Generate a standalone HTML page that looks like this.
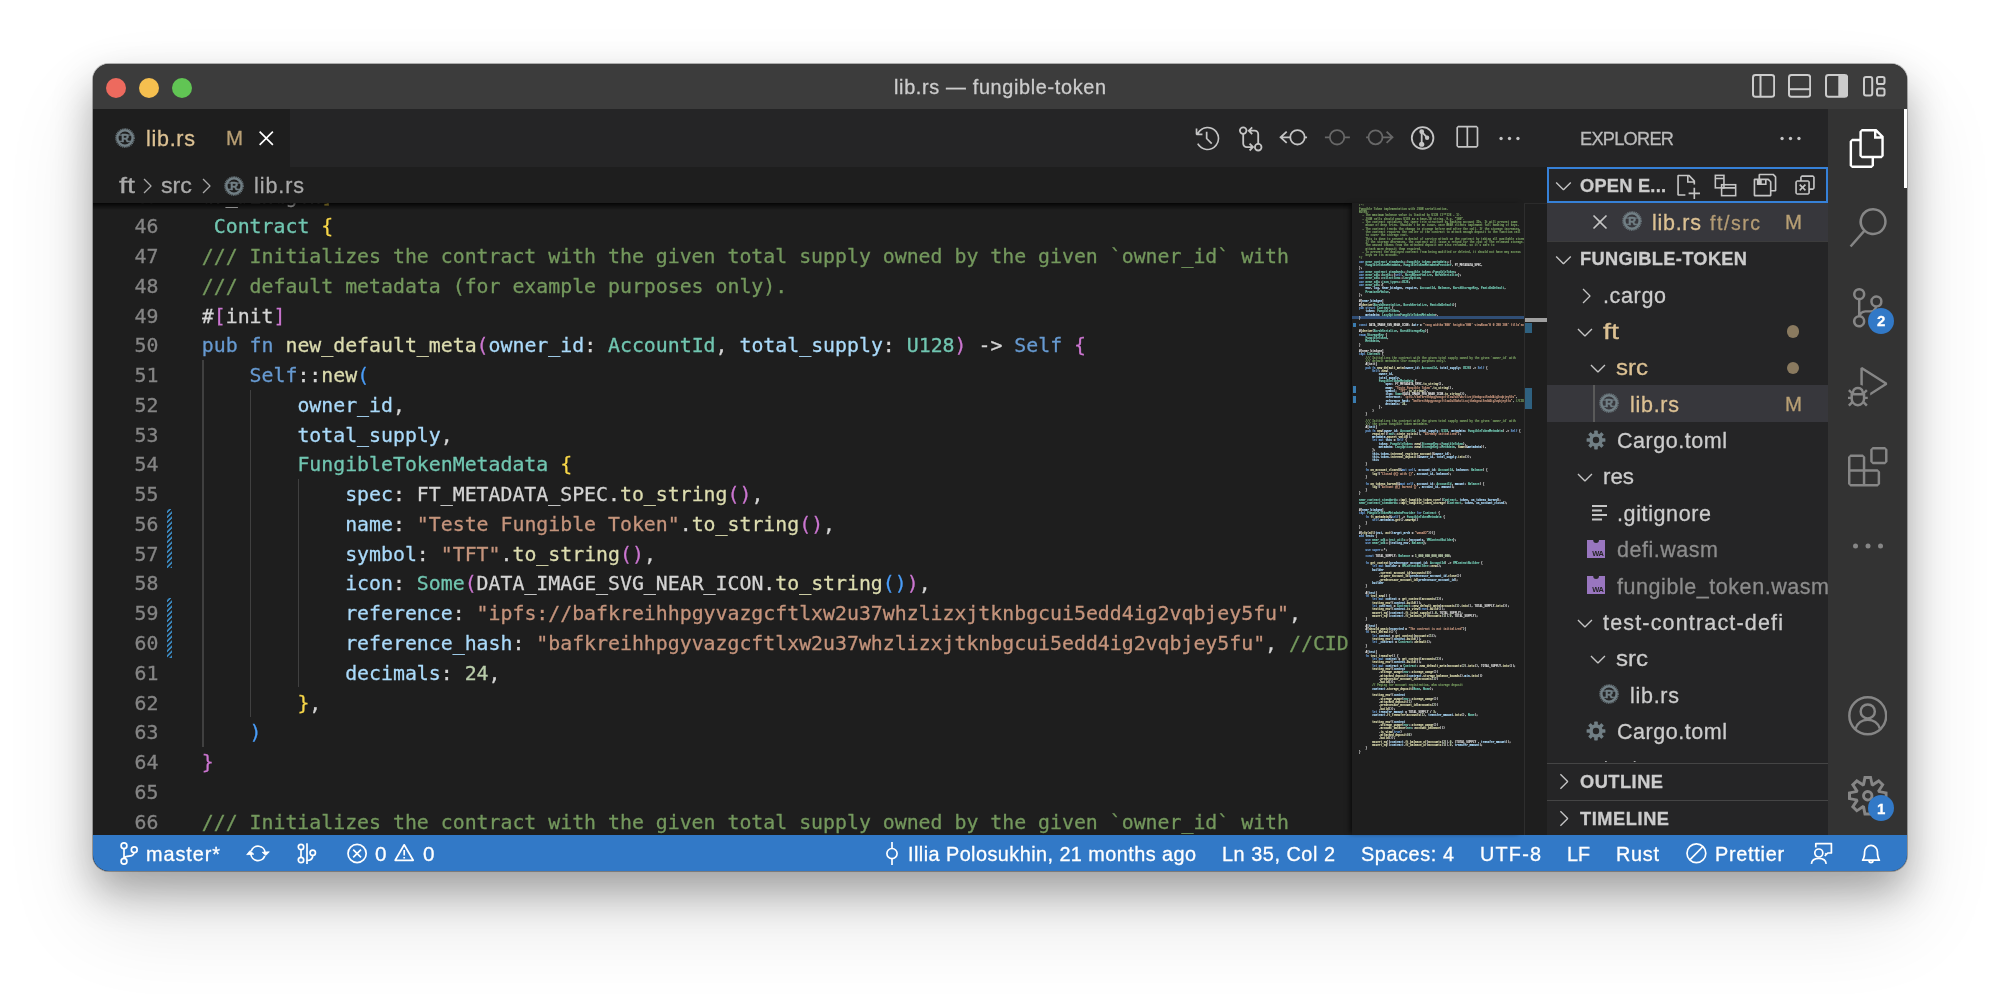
<!DOCTYPE html>
<html lang="en"><head><meta charset="utf-8"><title>lib.rs — fungible-token</title>
<style>
html,body{margin:0;padding:0;background:#FFFFFF;}
body{width:2000px;height:994px;overflow:hidden;position:relative;font-family:"Liberation Sans", "DejaVu Sans", sans-serif;}
#win{position:absolute;left:93px;top:64px;width:1814px;height:807px;border-radius:16px;overflow:hidden;box-shadow:0 0 0 1px rgba(0,0,0,0.28),0 20px 40px rgba(0,0,0,0.30),0 45px 90px rgba(0,0,0,0.12);background:#1E1E1E}
#in{position:absolute;left:-93px;top:-64px;width:2000px;height:994px}
.b{position:absolute;display:block}
.t,.cl,.ln{will-change:transform;-webkit-text-stroke:0.3px}
svg.b{will-change:transform}
.t{position:absolute;white-space:pre;display:block}
.ln{position:absolute;left:0;width:65.5px;height:29.77px;line-height:29.77px;text-align:right;font-family:"DejaVu Sans Mono", "Liberation Mono", monospace;font-size:19.85px;color:#858585}
.cl{position:absolute;white-space:pre;height:29.77px;line-height:29.77px;font-family:"DejaVu Sans Mono", "Liberation Mono", monospace;font-size:19.85px;color:#D4D4D4}
.mm{position:absolute;left:6.500px;top:0.5px;margin:0;font-family:"DejaVu Sans Mono", "Liberation Mono", monospace;font-size:16px;line-height:20px;transform-origin:0 0;transform:scale(0.1713,0.1655);opacity:1;-webkit-text-stroke:1.2px;white-space:pre}
</style></head>
<body>
<div id="win"><div id="in">
<div class="b" style="left:93.0px;top:64.0px;width:1814.0px;height:45.0px;background:#3C3C3C;"></div>
<div class="b" style="left:93.0px;top:109.0px;width:1454.0px;height:58.0px;background:#252526;"></div>
<div class="b" style="left:93.0px;top:109.0px;width:196.5px;height:58.0px;background:#1E1E1E;"></div>
<div class="b" style="left:93.0px;top:167.0px;width:1454.0px;height:704.0px;background:#1E1E1E;"></div>
<div class="b" style="left:1547.0px;top:109.0px;width:281.0px;height:726.0px;background:#252526;"></div>
<div class="b" style="left:1828.0px;top:109.0px;width:79.0px;height:726.0px;background:#333333;"></div>
<div class="b" style="left:93.0px;top:835.0px;width:1814.0px;height:36.0px;background:#3279C7;"></div>
<div class="b" style="left:105.8px;top:77.6px;width:20px;height:20px;border-radius:50%;background:#ED6A5E"></div>
<div class="b" style="left:138.8px;top:77.6px;width:20px;height:20px;border-radius:50%;background:#F5BF4F"></div>
<div class="b" style="left:171.8px;top:77.6px;width:20px;height:20px;border-radius:50%;background:#61C554"></div>
<span id="t1" class="t" style="left:894.0px;top:73.7px;font-size:19.85px;line-height:26px;color:#CCCCCC;letter-spacing:0.662px;">lib.rs — fungible-token</span>
<svg class="b" style="left:1752.0px;top:74.0px;" width="23.2" height="23.8" viewBox="0 0 23.200 23.800" fill="#C5C5C5"><rect x="1" y="1" width="21.200" height="21.800" rx="2.500" fill="none" stroke="#CCCCCC" stroke-width="2"/><rect x="7.500" y="1" width="2" height="21.800" fill="#CCCCCC"/></svg>
<svg class="b" style="left:1788.2px;top:74.0px;" width="23.2" height="23.8" viewBox="0 0 23.200 23.800" fill="#C5C5C5"><rect x="1" y="1" width="21.200" height="21.800" rx="2.500" fill="none" stroke="#CCCCCC" stroke-width="2"/><rect x="1" y="14.200" width="21.200" height="2" fill="#CCCCCC"/></svg>
<svg class="b" style="left:1824.5px;top:74.0px;" width="23.2" height="23.8" viewBox="0 0 23.200 23.800" fill="#C5C5C5"><rect x="1" y="1" width="21.200" height="21.800" rx="2.500" fill="none" stroke="#CCCCCC" stroke-width="2"/><path d="M13.300 1h6.400a2.500 2.500 0 0 1 2.500 2.500v16.800a2.500 2.500 0 0 1-2.500 2.500h-6.400z" fill="#CCCCCC"/></svg>
<svg class="b" style="left:1862.5px;top:76.0px;" width="22.5" height="20.5" viewBox="0 0 22.500 20.500" fill="#C5C5C5"><g fill="none" stroke="#CCCCCC" stroke-width="2"><rect x="1" y="1" width="8.200" height="18.500" rx="2"/><rect x="14" y="1" width="7.500" height="7" rx="1.800"/><rect x="14" y="12.500" width="7.500" height="7" rx="1.800"/></g></svg>
<svg class="b" style="left:114.5px;top:128.0px;" width="20.0" height="20.0" viewBox="0 0 20 20" fill="#C5C5C5"><g><circle cx="10" cy="10" r="9.200" fill="none" stroke="#717F85" stroke-width="1.100" stroke-dasharray="1.100 0.706"/><circle cx="10" cy="10" r="7.650" fill="none" stroke="#717F85" stroke-width="2.500"/><rect x="3.400" y="6.500" width="13.200" height="1.100" fill="#717F85"/><rect x="3.600" y="12.700" width="3.800" height="1.200" fill="#717F85"/><rect x="12.900" y="12.700" width="3.500" height="1.200" fill="#717F85"/><text x="10.100" y="13.900" text-anchor="middle" font-family="Liberation Sans,sans-serif" font-weight="700" font-size="10.800" stroke="#717F85" stroke-width="0.500" fill="#717F85">R</text></g></svg>
<span id="t2" class="t" style="left:146.0px;top:124.5px;font-size:21.50px;line-height:28px;color:#DCC193;letter-spacing:0.719px;">lib.rs</span>
<span id="t3" class="t" style="left:226.0px;top:126.0px;font-size:19.50px;line-height:25px;color:#B89F74;transform-origin:0 50%;transform:scaleX(1.0462);">M</span>
<svg class="b" style="left:253.2px;top:124.8px;" width="26.5" height="26.5" viewBox="0 0 16 16" fill="#FFFFFF"><path d="M8 8.707l3.646 3.647.708-.707L8.707 8l3.647-3.646-.707-.708L8 7.293 4.354 3.646l-.707.708L7.293 8l-3.646 3.646.707.708L8 8.707z"/></svg>
<svg class="b" style="left:1194.0px;top:124.5px;" width="27.0" height="27.0" viewBox="0 0 16 16" fill="#C5C5C5"><path d="M13.507 12.324a7 7 0 0 0 .065-8.56A7 7 0 0 0 2 4.393V2H1v3.5l.5.5H5V5H2.811a6.008 6.008 0 1 1-.135 5.77l-.887.462a7 7 0 0 0 11.718 1.092zm-3.361-.97l.708-.707L8 7.792V4H7v4l.146.354 3 3z"/></svg>
<svg class="b" style="left:1237.0px;top:124.0px" width="28.0" height="28.0" viewBox="0 0 28.0 28.0"><g fill="none" stroke="#C5C5C5" stroke-width="1.8"><circle cx="6.200" cy="6.600" r="3.300"/><circle cx="21.200" cy="23.200" r="3.300"/><path d="M6.200 9.900v9.600a3.600 3.600 0 0 0 3.600 3.600h6M12.600 19.700l3.400 3.400-3.400 3.400M21.200 19.900v-9.600a3.600 3.600 0 0 0-3.600-3.600h-5.800M15.200 3.300l-3.400 3.400 3.400 3.400"/></g></svg>
<svg class="b" style="left:1278.0px;top:125.0px" width="32.0" height="25.0" viewBox="0 0 32.0 25.0"><g fill="none" stroke="#C5C5C5" stroke-width="1.8"><circle cx="19.450" cy="12.300" r="7.200"/><path d="M26.650 12.300h2.400M12.250 12.300H2.600M8.700 6.700L2.600 12.300l6.100 5.600"/></g></svg>
<svg class="b" style="left:1323.0px;top:125.0px" width="29.0" height="25.0" viewBox="0 0 29.0 25.0"><g fill="none" stroke="#686868" stroke-width="1.8"><circle cx="14.060" cy="12.300" r="7.200"/><path d="M1.900 12.300h4.900M21.300 12.300h5.600"/></g></svg>
<svg class="b" style="left:1364.0px;top:125.0px" width="32.0" height="25.0" viewBox="0 0 32.0 25.0"><g fill="none" stroke="#686868" stroke-width="1.8"><circle cx="11.500" cy="12.300" r="7.000"/><path d="M2.100 12.300h2.400M18.500 12.300h9.900M22.600 6.700l5.900 5.600-5.900 5.600"/></g></svg>
<svg class="b" style="left:1409.0px;top:124.0px" width="28.0" height="28.0" viewBox="0 0 28.0 28.0"><g fill="none" stroke="#C5C5C5" stroke-width="1.8"><circle cx="13.600" cy="13.950" r="10.800"/><path d="M12.700 7.650v12.600M12.700 7.650l5.400 6.050"/></g><g fill="#C5C5C5"><circle cx="12.700" cy="7.650" r="2.400"/><circle cx="12.700" cy="20.250" r="2.600"/><circle cx="18.100" cy="13.700" r="2.200"/></g></svg>
<svg class="b" style="left:1452.5px;top:124.0px;" width="27.0" height="27.0" viewBox="0 0 16 16" fill="#C5C5C5"><path d="M14 1H3L2 2v11l1 1h11l1-1V2l-1-1zM8 13H3V2h5v11zm6 0H9V2h5v11z"/></svg>
<svg class="b" style="left:1495.5px;top:124.5px;" width="27.0" height="27.0" viewBox="0 0 16 16" fill="#C5C5C5"><circle cx="3" cy="8" r="1"/><circle cx="8" cy="8" r="1"/><circle cx="13" cy="8" r="1"/></svg>
<span id="t4" class="t" style="left:119.0px;top:172.0px;font-size:21.50px;line-height:28px;color:#A9A9A9;transform-origin:0 50%;transform:scaleX(1.3386);">ft</span>
<svg class="b" style="left:135.0px;top:174.0px;" width="24.0" height="24.0" viewBox="0 0 16 16" fill="#A9A9A9"><path d="M10.072 8.024L5.715 3.667l.618-.62L11 7.716v.618L6.333 13l-.618-.619 4.357-4.357z"/></svg>
<span id="t5" class="t" style="left:161.0px;top:172.0px;font-size:21.50px;line-height:28px;color:#A9A9A9;transform-origin:0 50%;transform:scaleX(1.0812);">src</span>
<svg class="b" style="left:194.0px;top:174.0px;" width="24.0" height="24.0" viewBox="0 0 16 16" fill="#A9A9A9"><path d="M10.072 8.024L5.715 3.667l.618-.62L11 7.716v.618L6.333 13l-.618-.619 4.357-4.357z"/></svg>
<svg class="b" style="left:224.0px;top:175.5px;" width="20.0" height="20.0" viewBox="0 0 20 20" fill="#C5C5C5"><g><circle cx="10" cy="10" r="9.200" fill="none" stroke="#717F85" stroke-width="1.100" stroke-dasharray="1.100 0.706"/><circle cx="10" cy="10" r="7.650" fill="none" stroke="#717F85" stroke-width="2.500"/><rect x="3.400" y="6.500" width="13.200" height="1.100" fill="#717F85"/><rect x="3.600" y="12.700" width="3.800" height="1.200" fill="#717F85"/><rect x="12.900" y="12.700" width="3.500" height="1.200" fill="#717F85"/><text x="10.100" y="13.900" text-anchor="middle" font-family="Liberation Sans,sans-serif" font-weight="700" font-size="10.800" stroke="#717F85" stroke-width="0.500" fill="#717F85">R</text></g></svg>
<span id="t6" class="t" style="left:254.0px;top:172.0px;font-size:21.50px;line-height:28px;color:#A9A9A9;letter-spacing:0.919px;">lib.rs</span>
<div class="b" id="code" style="left:93px;top:203.4px;width:1259px;height:631.6px;overflow:hidden">
<div class="b" style="left:109.0px;top:156.6px;width:1.5px;height:387.0px;background:#404040"></div>
<div class="b" style="left:156.8px;top:186.4px;width:1.5px;height:327.5px;background:#404040"></div>
<div class="b" style="left:204.6px;top:275.7px;width:1.5px;height:208.4px;background:#404040"></div>
<div class="cl" style="top:-20.97px;left:61.20px"><span style="color:#D4D4D4">#</span><span style="color:#F9D849">[</span><span style="color:#D4D4D4">near_bindgen</span><span style="color:#F9D849">]</span></div>
<div class="cl" style="top:8.80px;left:61.20px"><span style="color:#679AD1">impl </span><span style="color:#71C6B1">Contract </span><span style="color:#F9D849">{</span></div>
<div class="cl" style="top:38.57px;left:61.20px"><span style="color:#D4D4D4">    </span><span style="color:#74985D">/// Initializes the contract with the given total supply owned by the given `owner_id` with</span></div>
<div class="cl" style="top:68.34px;left:61.20px"><span style="color:#D4D4D4">    </span><span style="color:#74985D">/// default metadata (for example purposes only).</span></div>
<div class="cl" style="top:98.11px;left:61.20px"><span style="color:#D4D4D4">    #</span><span style="color:#CC76D1">[</span><span style="color:#D4D4D4">init</span><span style="color:#CC76D1">]</span></div>
<div class="cl" style="top:127.88px;left:61.20px"><span style="color:#D4D4D4">    </span><span style="color:#679AD1">pub fn </span><span style="color:#DCDCAF">new_default_meta</span><span style="color:#CC76D1">(</span><span style="color:#AADAFA">owner_id</span><span style="color:#D4D4D4">: </span><span style="color:#71C6B1">AccountId</span><span style="color:#D4D4D4">, </span><span style="color:#AADAFA">total_supply</span><span style="color:#D4D4D4">: </span><span style="color:#71C6B1">U128</span><span style="color:#CC76D1">) </span><span style="color:#D4D4D4">-&gt; </span><span style="color:#679AD1">Self </span><span style="color:#CC76D1">{</span></div>
<div class="cl" style="top:157.65px;left:61.20px"><span style="color:#D4D4D4">        </span><span style="color:#679AD1">Self</span><span style="color:#D4D4D4">::</span><span style="color:#DCDCAF">new</span><span style="color:#4A9DF8">(</span></div>
<div class="cl" style="top:187.42px;left:61.20px"><span style="color:#D4D4D4">            </span><span style="color:#AADAFA">owner_id</span><span style="color:#D4D4D4">,</span></div>
<div class="cl" style="top:217.19px;left:61.20px"><span style="color:#D4D4D4">            </span><span style="color:#AADAFA">total_supply</span><span style="color:#D4D4D4">,</span></div>
<div class="cl" style="top:246.96px;left:61.20px"><span style="color:#D4D4D4">            </span><span style="color:#71C6B1">FungibleTokenMetadata </span><span style="color:#F9D849">{</span></div>
<div class="cl" style="top:276.73px;left:61.20px"><span style="color:#D4D4D4">                </span><span style="color:#AADAFA">spec</span><span style="color:#D4D4D4">: FT_METADATA_SPEC.</span><span style="color:#DCDCAF">to_string</span><span style="color:#CC76D1">()</span><span style="color:#D4D4D4">,</span></div>
<div class="cl" style="top:306.50px;left:61.20px"><span style="color:#D4D4D4">                </span><span style="color:#AADAFA">name</span><span style="color:#D4D4D4">: </span><span style="color:#C5947C">"Teste Fungible Token"</span><span style="color:#D4D4D4">.</span><span style="color:#DCDCAF">to_string</span><span style="color:#CC76D1">()</span><span style="color:#D4D4D4">,</span></div>
<div class="cl" style="top:336.27px;left:61.20px"><span style="color:#D4D4D4">                </span><span style="color:#AADAFA">symbol</span><span style="color:#D4D4D4">: </span><span style="color:#C5947C">"TFT"</span><span style="color:#D4D4D4">.</span><span style="color:#DCDCAF">to_string</span><span style="color:#CC76D1">()</span><span style="color:#D4D4D4">,</span></div>
<div class="cl" style="top:366.04px;left:61.20px"><span style="color:#D4D4D4">                </span><span style="color:#AADAFA">icon</span><span style="color:#D4D4D4">: </span><span style="color:#71C6B1">Some</span><span style="color:#CC76D1">(</span><span style="color:#D4D4D4">DATA_IMAGE_SVG_NEAR_ICON.</span><span style="color:#DCDCAF">to_string</span><span style="color:#4A9DF8">()</span><span style="color:#CC76D1">)</span><span style="color:#D4D4D4">,</span></div>
<div class="cl" style="top:395.81px;left:61.20px"><span style="color:#D4D4D4">                </span><span style="color:#AADAFA">reference</span><span style="color:#D4D4D4">: </span><span style="color:#C5947C">"ipfs://bafkreihhpgyvazgcftlxw2u37whzlizxjtknbgcui5edd4ig2vqbjey5fu"</span><span style="color:#D4D4D4">,</span></div>
<div class="cl" style="top:425.58px;left:61.20px"><span style="color:#D4D4D4">                </span><span style="color:#AADAFA">reference_hash</span><span style="color:#D4D4D4">: </span><span style="color:#C5947C">"bafkreihhpgyvazgcftlxw2u37whzlizxjtknbgcui5edd4ig2vqbjey5fu"</span><span style="color:#D4D4D4">, </span><span style="color:#74985D">//CID</span></div>
<div class="cl" style="top:455.35px;left:61.20px"><span style="color:#D4D4D4">                </span><span style="color:#AADAFA">decimals</span><span style="color:#D4D4D4">: </span><span style="color:#BACDAB">24</span><span style="color:#D4D4D4">,</span></div>
<div class="cl" style="top:485.12px;left:61.20px"><span style="color:#D4D4D4">            </span><span style="color:#F9D849">}</span><span style="color:#D4D4D4">,</span></div>
<div class="cl" style="top:514.89px;left:61.20px"><span style="color:#D4D4D4">        </span><span style="color:#4A9DF8">)</span></div>
<div class="cl" style="top:544.66px;left:61.20px"><span style="color:#D4D4D4">    </span><span style="color:#CC76D1">}</span></div>
<div class="cl" style="top:574.43px;left:61.20px"></div>
<div class="cl" style="top:604.20px;left:61.20px"><span style="color:#D4D4D4">    </span><span style="color:#74985D">/// Initializes the contract with the given total supply owned by the given `owner_id` with</span></div>
<div class="b" style="left:0;top:0;width:108.5px;height:100%;background:#1E1E1E"></div>
<div class="ln" style="top:-20.97px"><span class="num">45</span></div>
<div class="ln" style="top:8.80px"><span class="num">46</span></div>
<div class="ln" style="top:38.57px"><span class="num">47</span></div>
<div class="ln" style="top:68.34px"><span class="num">48</span></div>
<div class="ln" style="top:98.11px"><span class="num">49</span></div>
<div class="ln" style="top:127.88px"><span class="num">50</span></div>
<div class="ln" style="top:157.65px"><span class="num">51</span></div>
<div class="ln" style="top:187.42px"><span class="num">52</span></div>
<div class="ln" style="top:217.19px"><span class="num">53</span></div>
<div class="ln" style="top:246.96px"><span class="num">54</span></div>
<div class="ln" style="top:276.73px"><span class="num">55</span></div>
<div class="ln" style="top:306.50px"><span class="num">56</span></div>
<div class="ln" style="top:336.27px"><span class="num">57</span></div>
<div class="ln" style="top:366.04px"><span class="num">58</span></div>
<div class="ln" style="top:395.81px"><span class="num">59</span></div>
<div class="ln" style="top:425.58px"><span class="num">60</span></div>
<div class="ln" style="top:455.35px"><span class="num">61</span></div>
<div class="ln" style="top:485.12px"><span class="num">62</span></div>
<div class="ln" style="top:514.89px"><span class="num">63</span></div>
<div class="ln" style="top:544.66px"><span class="num">64</span></div>
<div class="ln" style="top:574.43px"><span class="num">65</span></div>
<div class="ln" style="top:604.20px"><span class="num">66</span></div>
<div class="b" style="left:73.9px;top:305.5px;width:5.400px;height:59.5px;background:repeating-linear-gradient(135deg,#1E1E1E 0,#1E1E1E 1.000px,#3A86BC 1.900px,#3A86BC 3.000px,#1E1E1E 3.540px)"></div>
<div class="b" style="left:73.9px;top:394.8px;width:5.400px;height:59.5px;background:repeating-linear-gradient(135deg,#1E1E1E 0,#1E1E1E 1.000px,#3A86BC 1.900px,#3A86BC 3.000px,#1E1E1E 3.540px)"></div>
<div class="b" style="left:0;top:0;width:100%;height:7px;background:linear-gradient(#000000cc,#00000000)"></div>
</div>
<div class="b" style="left:1352px;top:203.4px;width:172px;height:631.6px;overflow:hidden;box-shadow:-4px 0 5px -2px #000000aa">
<div class="b" style="left:0;top:112.4px;width:100%;height:3.400px;background:#304E75"></div>
<pre class="mm"><span style="color:#74985D">/*!</span>
<span style="color:#74985D">Fungible Token implementation with JSON serialization.</span>
<span style="color:#74985D">NOTES:</span>
<span style="color:#74985D">  - The maximum balance value is limited by U128 (2**128 - 1).</span>
<span style="color:#74985D">  - JSON calls should pass U128 as a base-10 string. E.g. "100".</span>
<span style="color:#74985D">  - The contract optimizes the inner trie structure by hashing account IDs. It will prevent some</span>
<span style="color:#74985D">    abuse of deep tries. Shouldn't be an issue, once NEAR clients implement full hashing of keys.</span>
<span style="color:#74985D">  - The contract tracks the change in storage before and after the call. If the storage increases,</span>
<span style="color:#74985D">    the contract requires the caller of the contract to attach enough deposit to the function call</span>
<span style="color:#74985D">    to cover the storage cost.</span>
<span style="color:#74985D">    This is done to prevent a denial of service attack on the contract by taking all available storage.</span>
<span style="color:#74985D">    If the storage decreases, the contract will issue a refund for the cost of the released storage.</span>
<span style="color:#74985D">    The unused tokens from the attached deposit are also refunded, so it's safe to</span>
<span style="color:#74985D">    attach more deposit than required.</span>
<span style="color:#74985D">  - To prevent the deployed contract from being modified or deleted, it should not have any access</span>
<span style="color:#74985D">    keys on its account.</span>
<span style="color:#74985D">*/</span>
<span style="color:#679AD1">use </span><span style="color:#71C6B1">near_contract_standards</span><span style="color:#D4D4D4">::</span><span style="color:#71C6B1">fungible_token</span><span style="color:#D4D4D4">::</span><span style="color:#71C6B1">metadata</span><span style="color:#D4D4D4">::{</span>
<span style="color:#D4D4D4">    </span><span style="color:#71C6B1">FungibleTokenMetadata</span><span style="color:#D4D4D4">, </span><span style="color:#71C6B1">FungibleTokenMetadataProvider</span><span style="color:#D4D4D4">, FT_METADATA_SPEC,</span>
<span style="color:#D4D4D4">};</span>
<span style="color:#679AD1">use </span><span style="color:#71C6B1">near_contract_standards</span><span style="color:#D4D4D4">::</span><span style="color:#71C6B1">fungible_token</span><span style="color:#D4D4D4">::</span><span style="color:#71C6B1">FungibleToken</span><span style="color:#D4D4D4">;</span>
<span style="color:#679AD1">use </span><span style="color:#71C6B1">near_sdk</span><span style="color:#D4D4D4">::</span><span style="color:#71C6B1">borsh</span><span style="color:#D4D4D4">::{</span><span style="color:#679AD1">self</span><span style="color:#D4D4D4">, </span><span style="color:#71C6B1">BorshDeserialize</span><span style="color:#D4D4D4">, </span><span style="color:#71C6B1">BorshSerialize</span><span style="color:#D4D4D4">};</span>
<span style="color:#679AD1">use </span><span style="color:#71C6B1">near_sdk</span><span style="color:#D4D4D4">::</span><span style="color:#71C6B1">collections</span><span style="color:#D4D4D4">::</span><span style="color:#71C6B1">LazyOption</span><span style="color:#D4D4D4">;</span>
<span style="color:#679AD1">use </span><span style="color:#71C6B1">near_sdk</span><span style="color:#D4D4D4">::</span><span style="color:#71C6B1">json_types</span><span style="color:#D4D4D4">::</span><span style="color:#71C6B1">U128</span><span style="color:#D4D4D4">;</span>
<span style="color:#679AD1">use </span><span style="color:#71C6B1">near_sdk</span><span style="color:#D4D4D4">::{</span>
<span style="color:#D4D4D4">    </span><span style="color:#AADAFA">env</span><span style="color:#D4D4D4">, </span><span style="color:#AADAFA">log</span><span style="color:#D4D4D4">, </span><span style="color:#AADAFA">near_bindgen</span><span style="color:#D4D4D4">, </span><span style="color:#AADAFA">require</span><span style="color:#D4D4D4">, </span><span style="color:#71C6B1">AccountId</span><span style="color:#D4D4D4">, </span><span style="color:#71C6B1">Balance</span><span style="color:#D4D4D4">, </span><span style="color:#71C6B1">BorshStorageKey</span><span style="color:#D4D4D4">, </span><span style="color:#71C6B1">PanicOnDefault</span><span style="color:#D4D4D4">,</span>
<span style="color:#D4D4D4">    </span><span style="color:#71C6B1">PromiseOrValue</span><span style="color:#D4D4D4">,</span>
<span style="color:#D4D4D4">};</span>

<span style="color:#D4D4D4">#[</span><span style="color:#AADAFA">near_bindgen</span><span style="color:#D4D4D4">]</span>
<span style="color:#D4D4D4">#[</span><span style="color:#DCDCAF">derive</span><span style="color:#D4D4D4">(</span><span style="color:#71C6B1">BorshDeserialize</span><span style="color:#D4D4D4">, </span><span style="color:#71C6B1">BorshSerialize</span><span style="color:#D4D4D4">, </span><span style="color:#71C6B1">PanicOnDefault</span><span style="color:#D4D4D4">)]</span>
<span style="color:#679AD1">pub struct </span><span style="color:#71C6B1">Contract </span><span style="color:#D4D4D4">{</span>
<span style="color:#D4D4D4">    </span><span style="color:#AADAFA">token</span><span style="color:#D4D4D4">: </span><span style="color:#71C6B1">FungibleToken</span><span style="color:#D4D4D4">,</span>
<span style="color:#D4D4D4">    </span><span style="color:#AADAFA">metadata</span><span style="color:#D4D4D4">: </span><span style="color:#71C6B1">LazyOption</span><span style="color:#D4D4D4">&lt;</span><span style="color:#71C6B1">FungibleTokenMetadata</span><span style="color:#D4D4D4">&gt;,</span>
<span style="color:#D4D4D4">}</span>

<span style="color:#679AD1">const </span><span style="color:#D4D4D4">DATA_IMAGE_SVG_NEAR_ICON: &amp;</span><span style="color:#AADAFA">str </span><span style="color:#D4D4D4">= </span><span style="color:#C5947C">"&lt;svg width='800' height='800' viewBox='0 0 288 288' fill='none' stroke='currentColor'&gt;"</span><span style="color:#D4D4D4">;</span>

<span style="color:#D4D4D4">#[</span><span style="color:#DCDCAF">derive</span><span style="color:#D4D4D4">(</span><span style="color:#71C6B1">BorshSerialize</span><span style="color:#D4D4D4">, </span><span style="color:#71C6B1">BorshStorageKey</span><span style="color:#D4D4D4">)]</span>
<span style="color:#679AD1">enum </span><span style="color:#71C6B1">StorageKey </span><span style="color:#D4D4D4">{</span>
<span style="color:#D4D4D4">    </span><span style="color:#71C6B1">FungibleToken</span><span style="color:#D4D4D4">,</span>
<span style="color:#D4D4D4">    </span><span style="color:#71C6B1">Metadata</span><span style="color:#D4D4D4">,</span>
<span style="color:#D4D4D4">}</span>

<span style="color:#D4D4D4">#[near_bindgen]</span>
<span style="color:#679AD1">impl </span><span style="color:#71C6B1">Contract </span><span style="color:#D4D4D4">{</span>
<span style="color:#D4D4D4">    </span><span style="color:#74985D">/// Initializes the contract with the given total supply owned by the given `owner_id` with</span>
<span style="color:#D4D4D4">    </span><span style="color:#74985D">/// default metadata (for example purposes only).</span>
<span style="color:#D4D4D4">    #[init]</span>
<span style="color:#D4D4D4">    </span><span style="color:#679AD1">pub fn </span><span style="color:#DCDCAF">new_default_meta</span><span style="color:#D4D4D4">(</span><span style="color:#AADAFA">owner_id</span><span style="color:#D4D4D4">: </span><span style="color:#71C6B1">AccountId</span><span style="color:#D4D4D4">, </span><span style="color:#AADAFA">total_supply</span><span style="color:#D4D4D4">: </span><span style="color:#71C6B1">U128</span><span style="color:#D4D4D4">) -&gt; </span><span style="color:#679AD1">Self </span><span style="color:#D4D4D4">{</span>
<span style="color:#D4D4D4">        </span><span style="color:#679AD1">Self</span><span style="color:#D4D4D4">::</span><span style="color:#DCDCAF">new</span><span style="color:#D4D4D4">(</span>
<span style="color:#D4D4D4">            </span><span style="color:#AADAFA">owner_id</span><span style="color:#D4D4D4">,</span>
<span style="color:#D4D4D4">            </span><span style="color:#AADAFA">total_supply</span><span style="color:#D4D4D4">,</span>
<span style="color:#D4D4D4">            </span><span style="color:#71C6B1">FungibleTokenMetadata </span><span style="color:#D4D4D4">{</span>
<span style="color:#D4D4D4">                </span><span style="color:#AADAFA">spec</span><span style="color:#D4D4D4">: FT_METADATA_SPEC.</span><span style="color:#DCDCAF">to_string</span><span style="color:#D4D4D4">(),</span>
<span style="color:#D4D4D4">                </span><span style="color:#AADAFA">name</span><span style="color:#D4D4D4">: </span><span style="color:#C5947C">"Teste Fungible Token"</span><span style="color:#D4D4D4">.</span><span style="color:#DCDCAF">to_string</span><span style="color:#D4D4D4">(),</span>
<span style="color:#D4D4D4">                </span><span style="color:#AADAFA">symbol</span><span style="color:#D4D4D4">: </span><span style="color:#C5947C">"TFT"</span><span style="color:#D4D4D4">.</span><span style="color:#DCDCAF">to_string</span><span style="color:#D4D4D4">(),</span>
<span style="color:#D4D4D4">                </span><span style="color:#AADAFA">icon</span><span style="color:#D4D4D4">: </span><span style="color:#71C6B1">Some</span><span style="color:#D4D4D4">(DATA_IMAGE_SVG_NEAR_ICON.</span><span style="color:#DCDCAF">to_string</span><span style="color:#D4D4D4">()),</span>
<span style="color:#D4D4D4">                </span><span style="color:#AADAFA">reference</span><span style="color:#D4D4D4">: </span><span style="color:#C5947C">"ipfs://bafkreihhpgyvazgcftlxw2u37whzlizxjtknbgcui5edd4ig2vqbjey5fu"</span><span style="color:#D4D4D4">,</span>
<span style="color:#D4D4D4">                </span><span style="color:#AADAFA">reference_hash</span><span style="color:#D4D4D4">: </span><span style="color:#C5947C">"bafkreihhpgyvazgcftlxw2u37whzlizxjtknbgcui5edd4ig2vqbjey5fu"</span><span style="color:#D4D4D4">, </span><span style="color:#74985D">//CID</span>
<span style="color:#D4D4D4">                </span><span style="color:#AADAFA">decimals</span><span style="color:#D4D4D4">: </span><span style="color:#BACDAB">24</span><span style="color:#D4D4D4">,</span>
<span style="color:#D4D4D4">            },</span>
<span style="color:#D4D4D4">        )</span>
<span style="color:#D4D4D4">    }</span>

<span style="color:#D4D4D4">    </span><span style="color:#74985D">/// Initializes the contract with the given total supply owned by the given `owner_id` with</span>
<span style="color:#D4D4D4">    </span><span style="color:#74985D">/// the given fungible token metadata.</span>
<span style="color:#D4D4D4">    #[</span><span style="color:#AADAFA">init</span><span style="color:#D4D4D4">]</span>
<span style="color:#D4D4D4">    </span><span style="color:#679AD1">pub fn </span><span style="color:#DCDCAF">new</span><span style="color:#D4D4D4">(</span><span style="color:#AADAFA">owner_id</span><span style="color:#D4D4D4">: </span><span style="color:#71C6B1">AccountId</span><span style="color:#D4D4D4">, </span><span style="color:#AADAFA">total_supply</span><span style="color:#D4D4D4">: </span><span style="color:#71C6B1">U128</span><span style="color:#D4D4D4">, </span><span style="color:#AADAFA">metadata</span><span style="color:#D4D4D4">: </span><span style="color:#71C6B1">FungibleTokenMetadata</span><span style="color:#D4D4D4">) -&gt; </span><span style="color:#679AD1">Self </span><span style="color:#D4D4D4">{</span>
<span style="color:#D4D4D4">        </span><span style="color:#DCDCAF">require</span><span style="color:#D4D4D4">!(!</span><span style="color:#71C6B1">env</span><span style="color:#D4D4D4">::</span><span style="color:#DCDCAF">state_exists</span><span style="color:#D4D4D4">(), </span><span style="color:#C5947C">"Already initialized"</span><span style="color:#D4D4D4">);</span>
<span style="color:#D4D4D4">        </span><span style="color:#AADAFA">metadata</span><span style="color:#D4D4D4">.</span><span style="color:#DCDCAF">assert_valid</span><span style="color:#D4D4D4">();</span>
<span style="color:#D4D4D4">        </span><span style="color:#679AD1">let mut </span><span style="color:#AADAFA">this </span><span style="color:#D4D4D4">= </span><span style="color:#679AD1">Self </span><span style="color:#D4D4D4">{</span>
<span style="color:#D4D4D4">            </span><span style="color:#AADAFA">token</span><span style="color:#D4D4D4">: </span><span style="color:#71C6B1">FungibleToken</span><span style="color:#D4D4D4">::</span><span style="color:#DCDCAF">new</span><span style="color:#D4D4D4">(</span><span style="color:#71C6B1">StorageKey</span><span style="color:#D4D4D4">::</span><span style="color:#71C6B1">FungibleToken</span><span style="color:#D4D4D4">),</span>
<span style="color:#D4D4D4">            </span><span style="color:#AADAFA">metadata</span><span style="color:#D4D4D4">: </span><span style="color:#71C6B1">LazyOption</span><span style="color:#D4D4D4">::</span><span style="color:#DCDCAF">new</span><span style="color:#D4D4D4">(</span><span style="color:#71C6B1">StorageKey</span><span style="color:#D4D4D4">::</span><span style="color:#71C6B1">Metadata</span><span style="color:#D4D4D4">, </span><span style="color:#DCDCAF">Some</span><span style="color:#D4D4D4">(&amp;</span><span style="color:#AADAFA">metadata</span><span style="color:#D4D4D4">)),</span>
<span style="color:#D4D4D4">        };</span>
<span style="color:#D4D4D4">        </span><span style="color:#AADAFA">this</span><span style="color:#D4D4D4">.</span><span style="color:#AADAFA">token</span><span style="color:#D4D4D4">.</span><span style="color:#DCDCAF">internal_register_account</span><span style="color:#D4D4D4">(&amp;</span><span style="color:#AADAFA">owner_id</span><span style="color:#D4D4D4">);</span>
<span style="color:#D4D4D4">        </span><span style="color:#AADAFA">this</span><span style="color:#D4D4D4">.</span><span style="color:#AADAFA">token</span><span style="color:#D4D4D4">.</span><span style="color:#DCDCAF">internal_deposit</span><span style="color:#D4D4D4">(&amp;</span><span style="color:#AADAFA">owner_id</span><span style="color:#D4D4D4">, </span><span style="color:#AADAFA">total_supply</span><span style="color:#D4D4D4">.</span><span style="color:#DCDCAF">into</span><span style="color:#D4D4D4">());</span>
<span style="color:#D4D4D4">        </span><span style="color:#AADAFA">this</span>
<span style="color:#D4D4D4">    }</span>

<span style="color:#D4D4D4">    </span><span style="color:#679AD1">fn </span><span style="color:#DCDCAF">on_account_closed</span><span style="color:#D4D4D4">(&amp;</span><span style="color:#679AD1">mut self</span><span style="color:#D4D4D4">, </span><span style="color:#AADAFA">account_id</span><span style="color:#D4D4D4">: </span><span style="color:#71C6B1">AccountId</span><span style="color:#D4D4D4">, </span><span style="color:#AADAFA">balance</span><span style="color:#D4D4D4">: </span><span style="color:#71C6B1">Balance</span><span style="color:#D4D4D4">) {</span>
<span style="color:#D4D4D4">        </span><span style="color:#DCDCAF">log</span><span style="color:#D4D4D4">!(</span><span style="color:#C5947C">"Closed @{} with {}"</span><span style="color:#D4D4D4">, </span><span style="color:#AADAFA">account_id</span><span style="color:#D4D4D4">, </span><span style="color:#AADAFA">balance</span><span style="color:#D4D4D4">);</span>
<span style="color:#D4D4D4">    }</span>

<span style="color:#D4D4D4">    </span><span style="color:#679AD1">fn </span><span style="color:#DCDCAF">on_tokens_burned</span><span style="color:#D4D4D4">(&amp;</span><span style="color:#679AD1">mut self</span><span style="color:#D4D4D4">, </span><span style="color:#AADAFA">account_id</span><span style="color:#D4D4D4">: </span><span style="color:#71C6B1">AccountId</span><span style="color:#D4D4D4">, </span><span style="color:#AADAFA">amount</span><span style="color:#D4D4D4">: </span><span style="color:#71C6B1">Balance</span><span style="color:#D4D4D4">) {</span>
<span style="color:#D4D4D4">        </span><span style="color:#DCDCAF">log</span><span style="color:#D4D4D4">!(</span><span style="color:#C5947C">"Account @{} burned {}"</span><span style="color:#D4D4D4">, </span><span style="color:#AADAFA">account_id</span><span style="color:#D4D4D4">, </span><span style="color:#AADAFA">amount</span><span style="color:#D4D4D4">);</span>
<span style="color:#D4D4D4">    }</span>
<span style="color:#D4D4D4">}</span>

<span style="color:#71C6B1">near_contract_standards</span><span style="color:#D4D4D4">::</span><span style="color:#DCDCAF">impl_fungible_token_core</span><span style="color:#D4D4D4">!(</span><span style="color:#71C6B1">Contract</span><span style="color:#D4D4D4">, </span><span style="color:#AADAFA">token</span><span style="color:#D4D4D4">, </span><span style="color:#AADAFA">on_tokens_burned</span><span style="color:#D4D4D4">);</span>
<span style="color:#71C6B1">near_contract_standards</span><span style="color:#D4D4D4">::</span><span style="color:#DCDCAF">impl_fungible_token_storage</span><span style="color:#D4D4D4">!(</span><span style="color:#71C6B1">Contract</span><span style="color:#D4D4D4">, </span><span style="color:#AADAFA">token</span><span style="color:#D4D4D4">, </span><span style="color:#AADAFA">on_account_closed</span><span style="color:#D4D4D4">);</span>

<span style="color:#D4D4D4">#[</span><span style="color:#AADAFA">near_bindgen</span><span style="color:#D4D4D4">]</span>
<span style="color:#679AD1">impl </span><span style="color:#71C6B1">FungibleTokenMetadataProvider </span><span style="color:#679AD1">for </span><span style="color:#71C6B1">Contract </span><span style="color:#D4D4D4">{</span>
<span style="color:#D4D4D4">    </span><span style="color:#679AD1">fn </span><span style="color:#DCDCAF">ft_metadata</span><span style="color:#D4D4D4">(&amp;</span><span style="color:#679AD1">self</span><span style="color:#D4D4D4">) -&gt; </span><span style="color:#71C6B1">FungibleTokenMetadata </span><span style="color:#D4D4D4">{</span>
<span style="color:#D4D4D4">        </span><span style="color:#679AD1">self</span><span style="color:#D4D4D4">.</span><span style="color:#AADAFA">metadata</span><span style="color:#D4D4D4">.</span><span style="color:#DCDCAF">get</span><span style="color:#D4D4D4">().</span><span style="color:#DCDCAF">unwrap</span><span style="color:#D4D4D4">()</span>
<span style="color:#D4D4D4">    }</span>
<span style="color:#D4D4D4">}</span>

<span style="color:#D4D4D4">#[</span><span style="color:#DCDCAF">cfg</span><span style="color:#D4D4D4">(</span><span style="color:#DCDCAF">all</span><span style="color:#D4D4D4">(</span><span style="color:#AADAFA">test</span><span style="color:#D4D4D4">, </span><span style="color:#DCDCAF">not</span><span style="color:#D4D4D4">(</span><span style="color:#AADAFA">target_arch </span><span style="color:#D4D4D4">= </span><span style="color:#C5947C">"wasm32"</span><span style="color:#D4D4D4">)))]</span>
<span style="color:#679AD1">mod </span><span style="color:#AADAFA">tests </span><span style="color:#D4D4D4">{</span>
<span style="color:#D4D4D4">    </span><span style="color:#679AD1">use </span><span style="color:#71C6B1">near_sdk</span><span style="color:#D4D4D4">::</span><span style="color:#71C6B1">test_utils</span><span style="color:#D4D4D4">::{</span><span style="color:#AADAFA">accounts</span><span style="color:#D4D4D4">, </span><span style="color:#71C6B1">VMContextBuilder</span><span style="color:#D4D4D4">};</span>
<span style="color:#D4D4D4">    </span><span style="color:#679AD1">use </span><span style="color:#71C6B1">near_sdk</span><span style="color:#D4D4D4">::{</span><span style="color:#AADAFA">testing_env</span><span style="color:#D4D4D4">, </span><span style="color:#71C6B1">Balance</span><span style="color:#D4D4D4">};</span>

<span style="color:#D4D4D4">    </span><span style="color:#679AD1">use super</span><span style="color:#D4D4D4">::*;</span>

<span style="color:#D4D4D4">    </span><span style="color:#679AD1">const </span><span style="color:#D4D4D4">TOTAL_SUPPLY: </span><span style="color:#71C6B1">Balance </span><span style="color:#D4D4D4">= </span><span style="color:#BACDAB">1_000_000_000_000_000</span><span style="color:#D4D4D4">;</span>

<span style="color:#D4D4D4">    </span><span style="color:#679AD1">fn </span><span style="color:#DCDCAF">get_context</span><span style="color:#D4D4D4">(</span><span style="color:#AADAFA">predecessor_account_id</span><span style="color:#D4D4D4">: </span><span style="color:#71C6B1">AccountId</span><span style="color:#D4D4D4">) -&gt; </span><span style="color:#71C6B1">VMContextBuilder </span><span style="color:#D4D4D4">{</span>
<span style="color:#D4D4D4">        </span><span style="color:#679AD1">let mut </span><span style="color:#AADAFA">builder </span><span style="color:#D4D4D4">= </span><span style="color:#71C6B1">VMContextBuilder</span><span style="color:#D4D4D4">::</span><span style="color:#DCDCAF">new</span><span style="color:#D4D4D4">();</span>
<span style="color:#D4D4D4">        </span><span style="color:#AADAFA">builder</span>
<span style="color:#D4D4D4">            .</span><span style="color:#DCDCAF">current_account_id</span><span style="color:#D4D4D4">(</span><span style="color:#DCDCAF">accounts</span><span style="color:#D4D4D4">(</span><span style="color:#BACDAB">0</span><span style="color:#D4D4D4">))</span>
<span style="color:#D4D4D4">            .</span><span style="color:#DCDCAF">signer_account_id</span><span style="color:#D4D4D4">(</span><span style="color:#AADAFA">predecessor_account_id</span><span style="color:#D4D4D4">.</span><span style="color:#DCDCAF">clone</span><span style="color:#D4D4D4">())</span>
<span style="color:#D4D4D4">            .</span><span style="color:#DCDCAF">predecessor_account_id</span><span style="color:#D4D4D4">(</span><span style="color:#AADAFA">predecessor_account_id</span><span style="color:#D4D4D4">);</span>
<span style="color:#D4D4D4">        </span><span style="color:#AADAFA">builder</span>
<span style="color:#D4D4D4">    }</span>

<span style="color:#D4D4D4">    #[</span><span style="color:#AADAFA">test</span><span style="color:#D4D4D4">]</span>
<span style="color:#D4D4D4">    </span><span style="color:#679AD1">fn </span><span style="color:#DCDCAF">test_new</span><span style="color:#D4D4D4">() {</span>
<span style="color:#D4D4D4">        </span><span style="color:#679AD1">let mut </span><span style="color:#AADAFA">context </span><span style="color:#D4D4D4">= </span><span style="color:#DCDCAF">get_context</span><span style="color:#D4D4D4">(</span><span style="color:#DCDCAF">accounts</span><span style="color:#D4D4D4">(</span><span style="color:#BACDAB">1</span><span style="color:#D4D4D4">));</span>
<span style="color:#D4D4D4">        </span><span style="color:#DCDCAF">testing_env</span><span style="color:#D4D4D4">!(</span><span style="color:#AADAFA">context</span><span style="color:#D4D4D4">.</span><span style="color:#DCDCAF">build</span><span style="color:#D4D4D4">());</span>
<span style="color:#D4D4D4">        </span><span style="color:#679AD1">let </span><span style="color:#AADAFA">contract </span><span style="color:#D4D4D4">= </span><span style="color:#71C6B1">Contract</span><span style="color:#D4D4D4">::</span><span style="color:#DCDCAF">new_default_meta</span><span style="color:#D4D4D4">(</span><span style="color:#DCDCAF">accounts</span><span style="color:#D4D4D4">(</span><span style="color:#BACDAB">1</span><span style="color:#D4D4D4">).</span><span style="color:#DCDCAF">into</span><span style="color:#D4D4D4">(), TOTAL_SUPPLY.</span><span style="color:#DCDCAF">into</span><span style="color:#D4D4D4">());</span>
<span style="color:#D4D4D4">        </span><span style="color:#DCDCAF">testing_env</span><span style="color:#D4D4D4">!(</span><span style="color:#AADAFA">context</span><span style="color:#D4D4D4">.</span><span style="color:#DCDCAF">is_view</span><span style="color:#D4D4D4">(</span><span style="color:#679AD1">true</span><span style="color:#D4D4D4">).</span><span style="color:#DCDCAF">build</span><span style="color:#D4D4D4">());</span>
<span style="color:#D4D4D4">        </span><span style="color:#DCDCAF">assert_eq</span><span style="color:#D4D4D4">!(</span><span style="color:#AADAFA">contract</span><span style="color:#D4D4D4">.</span><span style="color:#DCDCAF">ft_total_supply</span><span style="color:#D4D4D4">().</span><span style="color:#BACDAB">0</span><span style="color:#D4D4D4">, TOTAL_SUPPLY);</span>
<span style="color:#D4D4D4">        </span><span style="color:#DCDCAF">assert_eq</span><span style="color:#D4D4D4">!(</span><span style="color:#AADAFA">contract</span><span style="color:#D4D4D4">.</span><span style="color:#DCDCAF">ft_balance_of</span><span style="color:#D4D4D4">(</span><span style="color:#DCDCAF">accounts</span><span style="color:#D4D4D4">(</span><span style="color:#BACDAB">1</span><span style="color:#D4D4D4">)).</span><span style="color:#BACDAB">0</span><span style="color:#D4D4D4">, TOTAL_SUPPLY);</span>
<span style="color:#D4D4D4">    }</span>

<span style="color:#D4D4D4">    #[</span><span style="color:#AADAFA">test</span><span style="color:#D4D4D4">]</span>
<span style="color:#D4D4D4">    #[</span><span style="color:#DCDCAF">should_panic</span><span style="color:#D4D4D4">(</span><span style="color:#AADAFA">expected </span><span style="color:#D4D4D4">= </span><span style="color:#C5947C">"The contract is not initialized"</span><span style="color:#D4D4D4">)]</span>
<span style="color:#D4D4D4">    </span><span style="color:#679AD1">fn </span><span style="color:#DCDCAF">test_default</span><span style="color:#D4D4D4">() {</span>
<span style="color:#D4D4D4">        </span><span style="color:#679AD1">let </span><span style="color:#AADAFA">context </span><span style="color:#D4D4D4">= </span><span style="color:#DCDCAF">get_context</span><span style="color:#D4D4D4">(</span><span style="color:#DCDCAF">accounts</span><span style="color:#D4D4D4">(</span><span style="color:#BACDAB">1</span><span style="color:#D4D4D4">));</span>
<span style="color:#D4D4D4">        </span><span style="color:#DCDCAF">testing_env</span><span style="color:#D4D4D4">!(</span><span style="color:#AADAFA">context</span><span style="color:#D4D4D4">.</span><span style="color:#DCDCAF">build</span><span style="color:#D4D4D4">());</span>
<span style="color:#D4D4D4">        </span><span style="color:#679AD1">let </span><span style="color:#AADAFA">_contract </span><span style="color:#D4D4D4">= </span><span style="color:#71C6B1">Contract</span><span style="color:#D4D4D4">::</span><span style="color:#DCDCAF">default</span><span style="color:#D4D4D4">();</span>
<span style="color:#D4D4D4">    }</span>

<span style="color:#D4D4D4">    #[</span><span style="color:#AADAFA">test</span><span style="color:#D4D4D4">]</span>
<span style="color:#D4D4D4">    </span><span style="color:#679AD1">fn </span><span style="color:#DCDCAF">test_transfer</span><span style="color:#D4D4D4">() {</span>
<span style="color:#D4D4D4">        </span><span style="color:#679AD1">let mut </span><span style="color:#AADAFA">context </span><span style="color:#D4D4D4">= </span><span style="color:#DCDCAF">get_context</span><span style="color:#D4D4D4">(</span><span style="color:#DCDCAF">accounts</span><span style="color:#D4D4D4">(</span><span style="color:#BACDAB">2</span><span style="color:#D4D4D4">));</span>
<span style="color:#D4D4D4">        </span><span style="color:#DCDCAF">testing_env</span><span style="color:#D4D4D4">!(</span><span style="color:#AADAFA">context</span><span style="color:#D4D4D4">.</span><span style="color:#DCDCAF">build</span><span style="color:#D4D4D4">());</span>
<span style="color:#D4D4D4">        </span><span style="color:#679AD1">let mut </span><span style="color:#AADAFA">contract </span><span style="color:#D4D4D4">= </span><span style="color:#71C6B1">Contract</span><span style="color:#D4D4D4">::</span><span style="color:#DCDCAF">new_default_meta</span><span style="color:#D4D4D4">(</span><span style="color:#DCDCAF">accounts</span><span style="color:#D4D4D4">(</span><span style="color:#BACDAB">2</span><span style="color:#D4D4D4">).</span><span style="color:#DCDCAF">into</span><span style="color:#D4D4D4">(), TOTAL_SUPPLY.</span><span style="color:#DCDCAF">into</span><span style="color:#D4D4D4">());</span>
<span style="color:#D4D4D4">        </span><span style="color:#DCDCAF">testing_env</span><span style="color:#D4D4D4">!(</span><span style="color:#AADAFA">context</span>
<span style="color:#D4D4D4">            .</span><span style="color:#DCDCAF">storage_usage</span><span style="color:#D4D4D4">(</span><span style="color:#71C6B1">env</span><span style="color:#D4D4D4">::</span><span style="color:#DCDCAF">storage_usage</span><span style="color:#D4D4D4">())</span>
<span style="color:#D4D4D4">            .</span><span style="color:#DCDCAF">attached_deposit</span><span style="color:#D4D4D4">(</span><span style="color:#AADAFA">contract</span><span style="color:#D4D4D4">.</span><span style="color:#DCDCAF">storage_balance_bounds</span><span style="color:#D4D4D4">().</span><span style="color:#AADAFA">min</span><span style="color:#D4D4D4">.</span><span style="color:#DCDCAF">into</span><span style="color:#D4D4D4">())</span>
<span style="color:#D4D4D4">            .</span><span style="color:#DCDCAF">predecessor_account_id</span><span style="color:#D4D4D4">(</span><span style="color:#DCDCAF">accounts</span><span style="color:#D4D4D4">(</span><span style="color:#BACDAB">1</span><span style="color:#D4D4D4">))</span>
<span style="color:#D4D4D4">            .</span><span style="color:#DCDCAF">build</span><span style="color:#D4D4D4">());</span>
<span style="color:#D4D4D4">        </span><span style="color:#74985D">// Paying for account registration, aka storage deposit</span>
<span style="color:#D4D4D4">        </span><span style="color:#AADAFA">contract</span><span style="color:#D4D4D4">.</span><span style="color:#DCDCAF">storage_deposit</span><span style="color:#D4D4D4">(</span><span style="color:#71C6B1">None</span><span style="color:#D4D4D4">, </span><span style="color:#71C6B1">None</span><span style="color:#D4D4D4">);</span>

<span style="color:#D4D4D4">        </span><span style="color:#DCDCAF">testing_env</span><span style="color:#D4D4D4">!(</span><span style="color:#AADAFA">context</span>
<span style="color:#D4D4D4">            .</span><span style="color:#DCDCAF">storage_usage</span><span style="color:#D4D4D4">(</span><span style="color:#71C6B1">env</span><span style="color:#D4D4D4">::</span><span style="color:#DCDCAF">storage_usage</span><span style="color:#D4D4D4">())</span>
<span style="color:#D4D4D4">            .</span><span style="color:#DCDCAF">attached_deposit</span><span style="color:#D4D4D4">(</span><span style="color:#BACDAB">1</span><span style="color:#D4D4D4">)</span>
<span style="color:#D4D4D4">            .</span><span style="color:#DCDCAF">predecessor_account_id</span><span style="color:#D4D4D4">(</span><span style="color:#DCDCAF">accounts</span><span style="color:#D4D4D4">(</span><span style="color:#BACDAB">2</span><span style="color:#D4D4D4">))</span>
<span style="color:#D4D4D4">            .</span><span style="color:#DCDCAF">build</span><span style="color:#D4D4D4">());</span>
<span style="color:#D4D4D4">        </span><span style="color:#679AD1">let </span><span style="color:#AADAFA">transfer_amount </span><span style="color:#D4D4D4">= TOTAL_SUPPLY / </span><span style="color:#BACDAB">3</span><span style="color:#D4D4D4">;</span>
<span style="color:#D4D4D4">        </span><span style="color:#AADAFA">contract</span><span style="color:#D4D4D4">.</span><span style="color:#DCDCAF">ft_transfer</span><span style="color:#D4D4D4">(</span><span style="color:#DCDCAF">accounts</span><span style="color:#D4D4D4">(</span><span style="color:#BACDAB">1</span><span style="color:#D4D4D4">), </span><span style="color:#AADAFA">transfer_amount</span><span style="color:#D4D4D4">.</span><span style="color:#DCDCAF">into</span><span style="color:#D4D4D4">(), </span><span style="color:#71C6B1">None</span><span style="color:#D4D4D4">);</span>

<span style="color:#D4D4D4">        </span><span style="color:#DCDCAF">testing_env</span><span style="color:#D4D4D4">!(</span><span style="color:#AADAFA">context</span>
<span style="color:#D4D4D4">            .</span><span style="color:#DCDCAF">storage_usage</span><span style="color:#D4D4D4">(</span><span style="color:#71C6B1">env</span><span style="color:#D4D4D4">::</span><span style="color:#DCDCAF">storage_usage</span><span style="color:#D4D4D4">())</span>
<span style="color:#D4D4D4">            .</span><span style="color:#DCDCAF">account_balance</span><span style="color:#D4D4D4">(</span><span style="color:#71C6B1">env</span><span style="color:#D4D4D4">::</span><span style="color:#DCDCAF">account_balance</span><span style="color:#D4D4D4">())</span>
<span style="color:#D4D4D4">            .</span><span style="color:#DCDCAF">is_view</span><span style="color:#D4D4D4">(</span><span style="color:#679AD1">true</span><span style="color:#D4D4D4">)</span>
<span style="color:#D4D4D4">            .</span><span style="color:#DCDCAF">attached_deposit</span><span style="color:#D4D4D4">(</span><span style="color:#BACDAB">0</span><span style="color:#D4D4D4">)</span>
<span style="color:#D4D4D4">            .</span><span style="color:#DCDCAF">build</span><span style="color:#D4D4D4">());</span>
<span style="color:#D4D4D4">        </span><span style="color:#DCDCAF">assert_eq</span><span style="color:#D4D4D4">!(</span><span style="color:#AADAFA">contract</span><span style="color:#D4D4D4">.</span><span style="color:#DCDCAF">ft_balance_of</span><span style="color:#D4D4D4">(</span><span style="color:#DCDCAF">accounts</span><span style="color:#D4D4D4">(</span><span style="color:#BACDAB">2</span><span style="color:#D4D4D4">)).</span><span style="color:#BACDAB">0</span><span style="color:#D4D4D4">, (TOTAL_SUPPLY - </span><span style="color:#AADAFA">transfer_amount</span><span style="color:#D4D4D4">));</span>
<span style="color:#D4D4D4">        </span><span style="color:#DCDCAF">assert_eq</span><span style="color:#D4D4D4">!(</span><span style="color:#AADAFA">contract</span><span style="color:#D4D4D4">.</span><span style="color:#DCDCAF">ft_balance_of</span><span style="color:#D4D4D4">(</span><span style="color:#DCDCAF">accounts</span><span style="color:#D4D4D4">(</span><span style="color:#BACDAB">1</span><span style="color:#D4D4D4">)).</span><span style="color:#BACDAB">0</span><span style="color:#D4D4D4">, </span><span style="color:#AADAFA">transfer_amount</span><span style="color:#D4D4D4">);</span>
<span style="color:#D4D4D4">    }</span>
<span style="color:#D4D4D4">}</span>
</pre>
<div class="b" style="left:1px;top:119.8px;width:2.500px;height:3.4px;background:#3A7CB0"></div>
<div class="b" style="left:1px;top:182.6px;width:2.500px;height:6.7px;background:#3A7CB0"></div>
<div class="b" style="left:1px;top:192.6px;width:2.500px;height:6.7px;background:#3A7CB0"></div>
</div>
<div class="b" style="left:1523.5px;top:202.9px;width:1.4px;height:632.1px;background:#2E2E2E;"></div>
<div class="b" style="left:1524.0px;top:202.9px;width:23.0px;height:1.4px;background:#2B2B2B;"></div>
<div class="b" style="left:1525.0px;top:318.0px;width:22.0px;height:3.7px;background:#A0A0A0;"></div>
<div class="b" style="left:1525.0px;top:323.0px;width:7.0px;height:10.0px;background:#2F6180;"></div>
<div class="b" style="left:1525.0px;top:388.4px;width:7.0px;height:21.0px;background:#2F6180;"></div>
<span id="t7" class="t" style="left:1580.0px;top:126.5px;font-size:18.20px;line-height:24px;color:#BBBBBB;letter-spacing:-0.723px;">EXPLORER</span>
<svg class="b" style="left:1776.5px;top:124.5px;" width="27.0" height="27.0" viewBox="0 0 16 16" fill="#C5C5C5"><circle cx="3" cy="8" r="1"/><circle cx="8" cy="8" r="1"/><circle cx="13" cy="8" r="1"/></svg>
<div class="b" style="left:1546.7px;top:167.0px;width:281.3px;height:36.2px;border:2px solid #3681D8;box-sizing:border-box"></div>
<svg class="b" style="left:1551.0px;top:173.0px;" width="25.0" height="25.0" viewBox="0 0 16 16" fill="#C5C5C5"><path d="M7.976 10.072l4.357-4.357.62.618L8.284 11h-.618L3 6.333l.619-.618 4.357 4.357z"/></svg>
<span id="t8" class="t" style="left:1580.0px;top:173.5px;font-size:18.20px;line-height:24px;color:#CCCCCC;font-weight:700;letter-spacing:0.264px;">OPEN E...</span>
<svg class="b" style="left:1674.3px;top:172.5px;" width="26.0" height="26.0" viewBox="0 0 16 16" fill="#C5C5C5"><path d="M9.5 1.1l3.4 3.5.1.4v2h-1V6H8V2H3v11h4v1H2.5l-.5-.5v-12l.5-.5h6.7l.3.1zM9 2v3h2.9L9 2zm4 14h-1v-3H9v-1h3V9h1v3h3v1h-3v3z"/></svg>
<svg class="b" style="left:1713.0px;top:172.5px;" width="25.0" height="25.0" viewBox="0 0 16 16" fill="#C5C5C5"><g fill="none" stroke="#C5C5C5" stroke-width="1"><rect x="1.500" y="1.500" width="5.500" height="8"/><rect x="5.500" y="7.500" width="9" height="7"/><path d="M1.500 3.500h5.500M5.500 9.500h9" /></g></svg>
<svg class="b" style="left:1752.0px;top:172.0px;" width="26.0" height="26.0" viewBox="0 0 16 16" fill="#C5C5C5"><path d="M14.85 2.65l-1.5-1.5L13 1H4.48l-.5.5V4H1.5l-.5.5v10l.5.5h10l.5-.5V12h2.5l.5-.5V3l-.15-.35zM11 14H2V5h1v3.07h6V5h.79L11 6.21V14zM6 7V5h2v2H6zm8 4h-2V6l-.15-.35-1.5-1.5L10 4H5V2h7.81l1.19 1.21V11z"/></svg>
<svg class="b" style="left:1792.0px;top:172.0px;" width="26.0" height="26.0" viewBox="0 0 16 16" fill="#C5C5C5"><path d="M8.621 8.086l-.707-.707L6.5 8.793 5.086 7.379l-.707.707L5.793 9.5l-1.414 1.414.707.707L6.5 10.207l1.414 1.414.707-.707L7.207 9.5l1.414-1.414z"/><path d="M5 3l1-1h7l1 1v7l-1 1h-2v2l-1 1H3l-1-1V6l1-1h2V3zm1 2h4l1 1v4h2V3H6v2zm4 1H3v7h7V6z"/></svg>
<div class="b" style="left:1547.0px;top:203.0px;width:281.0px;height:37.5px;background:#37373C;"></div>
<svg class="b" style="left:1586.5px;top:209.0px;" width="26.0" height="26.0" viewBox="0 0 16 16" fill="#C5C5C5"><path d="M8 8.707l3.646 3.647.708-.707L8.707 8l3.647-3.646-.707-.708L8 7.293 4.354 3.646l-.707.708L7.293 8l-3.646 3.646.707.708L8 8.707z"/></svg>
<svg class="b" style="left:1622.0px;top:211.3px;" width="20.0" height="20.0" viewBox="0 0 20 20" fill="#C5C5C5"><g><circle cx="10" cy="10" r="9.200" fill="none" stroke="#717F85" stroke-width="1.100" stroke-dasharray="1.100 0.706"/><circle cx="10" cy="10" r="7.650" fill="none" stroke="#717F85" stroke-width="2.500"/><rect x="3.400" y="6.500" width="13.200" height="1.100" fill="#717F85"/><rect x="3.600" y="12.700" width="3.800" height="1.200" fill="#717F85"/><rect x="12.900" y="12.700" width="3.500" height="1.200" fill="#717F85"/><text x="10.100" y="13.900" text-anchor="middle" font-family="Liberation Sans,sans-serif" font-weight="700" font-size="10.800" stroke="#717F85" stroke-width="0.500" fill="#717F85">R</text></g></svg>
<span id="t9" class="t" style="left:1652.0px;top:208.5px;font-size:21.50px;line-height:28px;color:#DCC193;letter-spacing:0.719px;">lib.rs</span>
<span id="t10" class="t" style="left:1710.0px;top:210.5px;font-size:19.50px;line-height:25px;color:#B39B74;letter-spacing:1.550px;">ft/src</span>
<span id="t11" class="t" style="left:1785.0px;top:210.0px;font-size:19.50px;line-height:25px;color:#B89F74;transform-origin:0 50%;transform:scaleX(1.0462);">M</span>
<div class="b" style="left:1547.0px;top:240.5px;width:281.0px;height:1.0px;background:#3C3C3C;"></div>
<svg class="b" style="left:1551.0px;top:246.5px;" width="25.0" height="25.0" viewBox="0 0 16 16" fill="#C5C5C5"><path d="M7.976 10.072l4.357-4.357.62.618L8.284 11h-.618L3 6.333l.619-.618 4.357 4.357z"/></svg>
<span id="t12" class="t" style="left:1580.0px;top:247.0px;font-size:18.20px;line-height:24px;color:#CCCCCC;font-weight:700;letter-spacing:0.358px;">FUNGIBLE-TOKEN</span>
<div class="b" style="left:1547.0px;top:385.4px;width:281.0px;height:36.4px;background:#37373C;"></div>
<div class="b" style="left:1593.0px;top:385.4px;width:1.5px;height:36.4px;background:#5A5A5A;"></div>
<div class="b" style="left:1547px;top:241px;width:281px;height:521px;overflow:hidden">
<svg class="b" style="left:27.0px;top:42.5px;" width="24.0" height="24.0" viewBox="0 0 16 16" fill="#C5C5C5"><path d="M10.072 8.024L5.715 3.667l.618-.62L11 7.716v.618L6.333 13l-.618-.619 4.357-4.357z"/></svg>
<span id="t13" class="t" style="left:56.0px;top:40.5px;font-size:21.50px;line-height:28px;color:#CCCCCC;letter-spacing:0.647px;">.cargo</span>
<svg class="b" style="left:25.5px;top:78.9px;" width="24.0" height="24.0" viewBox="0 0 16 16" fill="#C5C5C5"><path d="M7.976 10.072l4.357-4.357.62.618L8.284 11h-.618L3 6.333l.619-.618 4.357 4.357z"/></svg>
<span id="t14" class="t" style="left:56.0px;top:76.9px;font-size:21.50px;line-height:28px;color:#DCC193;transform-origin:0 50%;transform:scaleX(1.3386);">ft</span>
<svg class="b" style="left:38.5px;top:115.3px;" width="24.0" height="24.0" viewBox="0 0 16 16" fill="#C5C5C5"><path d="M7.976 10.072l4.357-4.357.62.618L8.284 11h-.618L3 6.333l.619-.618 4.357 4.357z"/></svg>
<span id="t15" class="t" style="left:69.0px;top:113.3px;font-size:21.50px;line-height:28px;color:#DCC193;transform-origin:0 50%;transform:scaleX(1.1161);">src</span>
<svg class="b" style="left:52.0px;top:152.1px;" width="20.0" height="20.0" viewBox="0 0 20 20" fill="#C5C5C5"><g><circle cx="10" cy="10" r="9.200" fill="none" stroke="#717F85" stroke-width="1.100" stroke-dasharray="1.100 0.706"/><circle cx="10" cy="10" r="7.650" fill="none" stroke="#717F85" stroke-width="2.500"/><rect x="3.400" y="6.500" width="13.200" height="1.100" fill="#717F85"/><rect x="3.600" y="12.700" width="3.800" height="1.200" fill="#717F85"/><rect x="12.900" y="12.700" width="3.500" height="1.200" fill="#717F85"/><text x="10.100" y="13.900" text-anchor="middle" font-family="Liberation Sans,sans-serif" font-weight="700" font-size="10.800" stroke="#717F85" stroke-width="0.500" fill="#717F85">R</text></g></svg>
<span id="t16" class="t" style="left:82.5px;top:149.6px;font-size:21.50px;line-height:28px;color:#DCC193;letter-spacing:0.719px;">lib.rs</span>
<svg class="b" style="left:39.0px;top:189.0px;" width="20.0" height="20.0" viewBox="0 0 20 20" fill="#C5C5C5"><g fill="#717F85"><rect x="8.200" y="0.600" width="3.600" height="5" rx="0.600" transform="rotate(0 10 10)"/><rect x="8.200" y="0.600" width="3.600" height="5" rx="0.600" transform="rotate(45 10 10)"/><rect x="8.200" y="0.600" width="3.600" height="5" rx="0.600" transform="rotate(90 10 10)"/><rect x="8.200" y="0.600" width="3.600" height="5" rx="0.600" transform="rotate(135 10 10)"/><rect x="8.200" y="0.600" width="3.600" height="5" rx="0.600" transform="rotate(180 10 10)"/><rect x="8.200" y="0.600" width="3.600" height="5" rx="0.600" transform="rotate(225 10 10)"/><rect x="8.200" y="0.600" width="3.600" height="5" rx="0.600" transform="rotate(270 10 10)"/><rect x="8.200" y="0.600" width="3.600" height="5" rx="0.600" transform="rotate(315 10 10)"/><path fill-rule="evenodd" d="M10 3.200a6.800 6.800 0 1 0 0 13.600a6.800 6.800 0 1 0 0-13.600zm0 3.600a3.200 3.200 0 1 1 0 6.400a3.200 3.200 0 1 1 0-6.400z"/></g></svg>
<span id="t17" class="t" style="left:69.5px;top:186.0px;font-size:21.50px;line-height:28px;color:#CCCCCC;letter-spacing:0.538px;">Cargo.toml</span>
<svg class="b" style="left:25.5px;top:224.4px;" width="24.0" height="24.0" viewBox="0 0 16 16" fill="#C5C5C5"><path d="M7.976 10.072l4.357-4.357.62.618L8.284 11h-.618L3 6.333l.619-.618 4.357 4.357z"/></svg>
<span id="t18" class="t" style="left:56.0px;top:222.4px;font-size:21.50px;line-height:28px;color:#CCCCCC;transform-origin:0 50%;transform:scaleX(1.0377);">res</span>
<svg class="b" style="left:44.5px;top:263.3px;" width="16.0" height="17.0" viewBox="0 0 16 17" fill="#C5C5C5"><g fill="#C5C5C5"><rect x="0" y="1" width="15" height="2"/><rect x="0" y="5.500" width="10" height="2"/><rect x="0" y="10" width="15" height="2"/><rect x="0" y="14.500" width="10" height="2"/></g></svg>
<span id="t19" class="t" style="left:69.5px;top:258.8px;font-size:21.50px;line-height:28px;color:#CCCCCC;letter-spacing:0.616px;">.gitignore</span>
<svg class="b" style="left:39.9px;top:298.7px;" width="18.2" height="18.2" viewBox="0 0 20 20" fill="#C5C5C5"><path d="M0 0h6.800a3.200 3.200 0 0 0 6.400 0h6.800v20h-20z" fill="#9976BF"/><text x="12" y="17.600" text-anchor="middle" font-family="Liberation Sans,sans-serif" font-weight="700" font-size="8.200" fill="#252526" letter-spacing="-0.400">WA</text></svg>
<span id="t20" class="t" style="left:69.5px;top:295.2px;font-size:21.50px;line-height:28px;color:#8C8C8C;letter-spacing:0.525px;">defi.wasm</span>
<svg class="b" style="left:39.9px;top:335.0px;" width="18.2" height="18.2" viewBox="0 0 20 20" fill="#C5C5C5"><path d="M0 0h6.800a3.200 3.200 0 0 0 6.400 0h6.800v20h-20z" fill="#9976BF"/><text x="12" y="17.600" text-anchor="middle" font-family="Liberation Sans,sans-serif" font-weight="700" font-size="8.200" fill="#252526" letter-spacing="-0.400">WA</text></svg>
<span id="t21" class="t" style="left:69.5px;top:331.5px;font-size:21.50px;line-height:28px;color:#8C8C8C;letter-spacing:0.556px;">fungible_token.wasm</span>
<svg class="b" style="left:25.5px;top:369.9px;" width="24.0" height="24.0" viewBox="0 0 16 16" fill="#C5C5C5"><path d="M7.976 10.072l4.357-4.357.62.618L8.284 11h-.618L3 6.333l.619-.618 4.357 4.357z"/></svg>
<span id="t22" class="t" style="left:56.0px;top:367.9px;font-size:21.50px;line-height:28px;color:#CCCCCC;letter-spacing:1.169px;">test-contract-defi</span>
<svg class="b" style="left:38.5px;top:406.3px;" width="24.0" height="24.0" viewBox="0 0 16 16" fill="#C5C5C5"><path d="M7.976 10.072l4.357-4.357.62.618L8.284 11h-.618L3 6.333l.619-.618 4.357 4.357z"/></svg>
<span id="t23" class="t" style="left:69.0px;top:404.3px;font-size:21.50px;line-height:28px;color:#CCCCCC;transform-origin:0 50%;transform:scaleX(1.1161);">src</span>
<svg class="b" style="left:52.0px;top:443.2px;" width="20.0" height="20.0" viewBox="0 0 20 20" fill="#C5C5C5"><g><circle cx="10" cy="10" r="9.200" fill="none" stroke="#717F85" stroke-width="1.100" stroke-dasharray="1.100 0.706"/><circle cx="10" cy="10" r="7.650" fill="none" stroke="#717F85" stroke-width="2.500"/><rect x="3.400" y="6.500" width="13.200" height="1.100" fill="#717F85"/><rect x="3.600" y="12.700" width="3.800" height="1.200" fill="#717F85"/><rect x="12.900" y="12.700" width="3.500" height="1.200" fill="#717F85"/><text x="10.100" y="13.900" text-anchor="middle" font-family="Liberation Sans,sans-serif" font-weight="700" font-size="10.800" stroke="#717F85" stroke-width="0.500" fill="#717F85">R</text></g></svg>
<span id="t24" class="t" style="left:82.5px;top:440.7px;font-size:21.50px;line-height:28px;color:#CCCCCC;letter-spacing:0.719px;">lib.rs</span>
<svg class="b" style="left:39.0px;top:480.1px;" width="20.0" height="20.0" viewBox="0 0 20 20" fill="#C5C5C5"><g fill="#717F85"><rect x="8.200" y="0.600" width="3.600" height="5" rx="0.600" transform="rotate(0 10 10)"/><rect x="8.200" y="0.600" width="3.600" height="5" rx="0.600" transform="rotate(45 10 10)"/><rect x="8.200" y="0.600" width="3.600" height="5" rx="0.600" transform="rotate(90 10 10)"/><rect x="8.200" y="0.600" width="3.600" height="5" rx="0.600" transform="rotate(135 10 10)"/><rect x="8.200" y="0.600" width="3.600" height="5" rx="0.600" transform="rotate(180 10 10)"/><rect x="8.200" y="0.600" width="3.600" height="5" rx="0.600" transform="rotate(225 10 10)"/><rect x="8.200" y="0.600" width="3.600" height="5" rx="0.600" transform="rotate(270 10 10)"/><rect x="8.200" y="0.600" width="3.600" height="5" rx="0.600" transform="rotate(315 10 10)"/><path fill-rule="evenodd" d="M10 3.200a6.800 6.800 0 1 0 0 13.600a6.800 6.800 0 1 0 0-13.600zm0 3.600a3.200 3.200 0 1 1 0 6.400a3.200 3.200 0 1 1 0-6.400z"/></g></svg>
<span id="t25" class="t" style="left:69.5px;top:477.1px;font-size:21.50px;line-height:28px;color:#CCCCCC;letter-spacing:0.538px;">Cargo.toml</span>
<span id="t26" class="t" style="left:56.0px;top:514.4px;font-size:21.50px;line-height:28px;color:#CCCCCC;">tests</span>
<div class="b" style="left:239.8px;top:84.1px;width:12.500px;height:12.500px;border-radius:50%;background:#8A7A5F"></div>
<div class="b" style="left:239.8px;top:120.5px;width:12.500px;height:12.500px;border-radius:50%;background:#8A7A5F"></div>
<span id="t27" class="t" style="left:238.0px;top:151.1px;font-size:19.50px;line-height:25px;color:#B89F74;transform-origin:0 50%;transform:scaleX(1.0462);">M</span>
</div>
<div class="b" style="left:1547.0px;top:763.0px;width:281.0px;height:1.0px;background:#454545;"></div>
<div class="b" style="left:1547.0px;top:799.5px;width:281.0px;height:1.0px;background:#454545;"></div>
<svg class="b" style="left:1551.0px;top:769.0px;" width="25.0" height="25.0" viewBox="0 0 16 16" fill="#C5C5C5"><path d="M10.072 8.024L5.715 3.667l.618-.62L11 7.716v.618L6.333 13l-.618-.619 4.357-4.357z"/></svg>
<span id="t28" class="t" style="left:1580.0px;top:770.0px;font-size:18.20px;line-height:24px;color:#CCCCCC;font-weight:700;letter-spacing:0.529px;">OUTLINE</span>
<svg class="b" style="left:1551.0px;top:805.5px;" width="25.0" height="25.0" viewBox="0 0 16 16" fill="#C5C5C5"><path d="M10.072 8.024L5.715 3.667l.618-.62L11 7.716v.618L6.333 13l-.618-.619 4.357-4.357z"/></svg>
<span id="t29" class="t" style="left:1580.0px;top:806.5px;font-size:18.20px;line-height:24px;color:#CCCCCC;font-weight:700;letter-spacing:0.589px;">TIMELINE</span>
<div class="b" style="left:1904.0px;top:109.0px;width:3.0px;height:79.0px;background:#FFFFFF;"></div>
<svg class="b" style="left:1847.5px;top:128.7px;" width="39.0" height="39.0" viewBox="0 0 24 24" fill="#FFFFFF"><path d="M17.5 0h-9L7 1.5V6H2.5L1 7.500v15.070L2.500 24h12.070L16 22.570V18h4.700l1.300-1.430V4.500L17.500 0zm0 2.120l2.380 2.380H17.500V2.120zm-3 20.380h-12v-15H7v9.070L8.500 18h6v4.500zm6-6h-12v-15H16V6h4.500v10.500z"/></svg>
<svg class="b" style="left:1848.2px;top:208.2px;" width="39.5" height="39.5" viewBox="0 0 24 24" fill="#868686"><path d="M15.250 0a8.250 8.250 0 0 0-6.180 13.720L1 22.880l1.120 1 8.050-9.120A8.251 8.251 0 1 0 15.250.010V0zm0 15a6.750 6.750 0 1 1 0-13.500 6.750 6.750 0 0 1 0 13.500z"/></svg>
<svg class="b" style="left:1847.8px;top:288.2px;" width="39.5" height="39.5" viewBox="0 0 24 24" fill="#868686"><path d="M21.007 8.222A3.738 3.738 0 0 0 15.045 5.200a3.737 3.737 0 0 0 1.156 6.583 2.988 2.988 0 0 1-2.668 1.670h-2.990a4.456 4.456 0 0 0-2.989 1.165V7.400a3.737 3.737 0 1 0-1.494 0v9.117a3.776 3.776 0 1 0 1.816.099 2.990 2.990 0 0 1 2.668-1.667h2.990a4.484 4.484 0 0 0 4.223-3.039 3.736 3.736 0 0 0 3.250-3.687zM4.565 3.738a2.242 2.242 0 1 1 4.484 0 2.242 2.242 0 0 1-4.484 0zm4.484 16.441a2.242 2.242 0 1 1-4.484 0 2.242 2.242 0 0 1 4.484 0zm8.221-9.715a2.242 2.242 0 1 1 0-4.485 2.242 2.242 0 0 1 0 4.485z"/></svg>
<svg class="b" style="left:1847.8px;top:367.2px;" width="39.5" height="39.5" viewBox="0 0 24 24" fill="#868686"><path d="M10.940 13.500l-1.320 1.320a3.730 3.730 0 0 0-7.240 0L1.060 13.500 0 14.560l1.720 1.720-.220.220V18H0v1.500h1.500v.080c.077.489.214.966.410 1.420L0 22.940 1.060 24l1.650-1.650A4.308 4.308 0 0 0 6 24a4.310 4.310 0 0 0 3.290-1.650L10.940 24 12 22.940 10.090 21c.198-.464.336-.951.410-1.450v-.100H12V18h-1.500v-1.500l-.220-.220L12 14.560l-1.060-1.060zM6 13.500a2.250 2.250 0 0 1 2.250 2.250h-4.500A2.250 2.250 0 0 1 6 13.500zm3 6a3.330 3.330 0 0 1-3 3 3.330 3.330 0 0 1-3-3v-2.250h6v2.250zm14.760-9.900v1.260L13.500 17.370V15.600l8.500-5.370L9 2v9.460a5.070 5.070 0 0 0-1.500-.720V.630L8.640 0l15.120 9.600z"/></svg>
<svg class="b" style="left:1847.8px;top:446.8px;" width="39.5" height="39.5" viewBox="0 0 24 24" fill="#868686"><path d="M13.500 1.500L15 0h7.500L24 1.500V9l-1.500 1.500H15L13.500 9V1.500zm1.500 0V9h7.500V1.500H15zM0 15V6l1.500-1.500H9L10.500 6v7.500H18l1.500 1.500v7.500L18 24H1.500L0 22.500V15zm9-1.500V6H1.500v7.500H9zM9 15H1.500v7.500H9V15zm1.500 7.500H18V15h-7.500v7.500z"/></svg>
<svg class="b" style="left:1847.5px;top:526.0px;" width="40.0" height="40.0" viewBox="0 0 16 16" fill="#868686"><circle cx="3" cy="8" r="1"/><circle cx="8" cy="8" r="1"/><circle cx="13" cy="8" r="1"/></svg>
<div class="b" style="left:1847.8px;top:696.2px;width:39.500px;height:39.500px;color:#868686">
<svg width="39.500" height="39.500" viewBox="0 0 24 24"><g fill="none" stroke="currentColor" stroke-width="1.5"><circle cx="12" cy="12" r="11.2"/><circle cx="12" cy="9.4" r="4.3"/><path d="M4.6 19.8c1.1-3.300 4-5.400 7.400-5.400s6.300 2.100 7.400 5.400"/></g></svg></div>
<svg class="b" style="left:1847.8px;top:775.8px;" width="39.5" height="39.5" viewBox="0 0 24 24" fill="#868686"><path d="M19.850 8.750l4.150.830v4.840l-4.150.830 2.350 3.520-3.430 3.430-3.520-2.350-.830 4.150H9.580l-.830-4.150-3.520 2.350-3.430-3.430 2.350-3.520L0 14.420V9.580l4.150-.830L1.800 5.230 5.230 1.800l3.520 2.350L9.580 0h4.840l.830 4.150 3.520-2.350 3.430 3.430-2.350 3.520zm-1.570 5.070l4-.810v-2l-4-.810-.540-1.300 2.290-3.430-1.430-1.430-3.430 2.290-1.300-.540-.810-4h-2l-.810 4-1.300.540-3.430-2.290-1.430 1.430L6.380 8.900l-.540 1.300-4 .810v2l4 .810.540 1.300-2.290 3.430 1.430 1.430 3.430-2.290 1.300.540.810 4h2l.810-4 1.300-.540 3.430 2.290 1.430-1.430-2.290-3.430.540-1.300zm-8.186-4.672A3.430 3.430 0 0 1 12 8.570 3.440 3.440 0 0 1 15.430 12a3.430 3.430 0 1 1-5.336-2.852zm.956 4.274c.281.188.612.288.950.288A1.700 1.700 0 0 0 13.710 12a1.710 1.710 0 1 0-2.660 1.422z"/></svg>
<div class="b" style="left:1867.8px;top:307.6px;width:26.500px;height:26.500px;border-radius:50%;background:#3279C7"></div>
<span id="t30" class="t" style="left:1876.5px;top:311.3px;font-size:15.00px;line-height:20px;color:#FFFFFF;font-weight:700;">2</span>
<div class="b" style="left:1867.8px;top:794.8px;width:26.500px;height:26.500px;border-radius:50%;background:#3279C7"></div>
<span id="t31" class="t" style="left:1876.5px;top:798.5px;font-size:15.00px;line-height:20px;color:#FFFFFF;font-weight:700;">1</span>
<svg class="b" style="left:115.0px;top:835px" width="26.0" height="36" viewBox="0 0 26.0 36"><g fill="none" stroke="#FFFFFF" stroke-width="1.70" stroke-linejoin="round"><circle cx="9" cy="10.750" r="2.900"/><circle cx="9" cy="26.250" r="2.900"/><circle cx="19.250" cy="14.750" r="2.900"/><path d="M9 13.650v9.700M19 17.650c-0.300 3-2.600 3.400-5 3.500c-2.600 0.100-4.200 0.600-5 2.200"/></g></svg>
<span id="t32" class="t" style="left:146.0px;top:840.5px;font-size:19.85px;line-height:26px;color:#FFFFFF;letter-spacing:0.938px;">master*</span>
<svg class="b" style="left:245.0px;top:835px" width="26.0" height="36" viewBox="0 0 26.0 36"><g fill="none" stroke="#FFFFFF" stroke-width="1.70" stroke-linejoin="round"><path d="M6.230 15.940A7.200 7.200 0 0 1 20.200 18.000"/><path d="M19.770 20.860A7.200 7.200 0 0 1 5.800 18.800"/><path d="M17.200 17.300L24.300 16.800L20.900 20.400z" fill="#FFFFFF" stroke-width="0.800"/><path d="M1.700 19.700L8.800 19.200L5 15.600z" fill="#FFFFFF" stroke-width="0.800"/></g></svg>
<svg class="b" style="left:295.0px;top:835px" width="24.0" height="36" viewBox="0 0 24.0 36"><g fill="none" stroke="#FFFFFF" stroke-width="1.70" stroke-linejoin="round"><circle cx="6" cy="12" r="2.700"/><circle cx="6" cy="25" r="2.700"/><circle cx="17.750" cy="17.750" r="2.700"/><path d="M6 14.700v7.600M12 8.250v20.750M17.750 20.450c0 3.600-2.200 5-5.750 5"/></g></svg>
<svg class="b" style="left:345.0px;top:835px" width="25.0" height="36" viewBox="0 0 25.0 36"><g fill="none" stroke="#FFFFFF" stroke-width="1.70" stroke-linejoin="round"><circle cx="12.100" cy="18.500" r="9.100"/><path d="M8.200 14.600l7.800 7.800M16 14.600l-7.800 7.800"/></g></svg>
<span id="t33" class="t" style="left:375.0px;top:840.5px;font-size:19.85px;line-height:26px;color:#FFFFFF;transform-origin:0 50%;transform:scaleX(1.0410);">0</span>
<svg class="b" style="left:392.0px;top:835px" width="25.0" height="36" viewBox="0 0 25.0 36"><g fill="none" stroke="#FFFFFF" stroke-width="1.70" stroke-linejoin="round"><path d="M12.200 9.800L21.200 25.300H3.200z"/><path d="M12.200 15v5.600M12.200 22v1.600"/></g></svg>
<span id="t34" class="t" style="left:422.5px;top:840.5px;font-size:19.85px;line-height:26px;color:#FFFFFF;transform-origin:0 50%;transform:scaleX(1.0410);">0</span>
<svg class="b" style="left:880.0px;top:835px" width="24.0" height="36" viewBox="0 0 24.0 36"><g fill="none" stroke="#FFFFFF" stroke-width="1.70" stroke-linejoin="round"><circle cx="12" cy="18.600" r="5.100"/><path d="M12 7v6.500M12 23.700v6.300"/></g></svg>
<span id="t35" class="t" style="left:908.0px;top:840.5px;font-size:19.85px;line-height:26px;color:#FFFFFF;letter-spacing:0.444px;">Illia Polosukhin, 21 months ago</span>
<span id="t36" class="t" style="left:1222.0px;top:840.5px;font-size:19.85px;line-height:26px;color:#FFFFFF;letter-spacing:0.544px;">Ln 35, Col 2</span>
<span id="t37" class="t" style="left:1361.0px;top:840.5px;font-size:19.85px;line-height:26px;color:#FFFFFF;letter-spacing:0.592px;">Spaces: 4</span>
<span id="t38" class="t" style="left:1480.0px;top:840.5px;font-size:19.85px;line-height:26px;color:#FFFFFF;letter-spacing:1.195px;">UTF-8</span>
<span id="t39" class="t" style="left:1567.0px;top:840.5px;font-size:19.85px;line-height:26px;color:#FFFFFF;transform-origin:0 50%;transform:scaleX(0.9926);">LF</span>
<span id="t40" class="t" style="left:1616.0px;top:840.5px;font-size:19.85px;line-height:26px;color:#FFFFFF;letter-spacing:0.729px;">Rust</span>
<svg class="b" style="left:1684.0px;top:835px" width="25.0" height="36" viewBox="0 0 25.0 36"><g fill="none" stroke="#FFFFFF" stroke-width="1.70" stroke-linejoin="round"><circle cx="12.400" cy="18.200" r="9.400"/><path d="M19 11.500L5.800 24.900"/></g></svg>
<span id="t41" class="t" style="left:1715.0px;top:840.5px;font-size:19.85px;line-height:26px;color:#FFFFFF;letter-spacing:0.719px;">Prettier</span>
<svg class="b" style="left:1808.0px;top:835px" width="26.0" height="36" viewBox="0 0 26.0 36"><g fill="none" stroke="#FFFFFF" stroke-width="1.70" stroke-linejoin="round"><circle cx="10.800" cy="18" r="4"/><path d="M3.400 28.800c0.400-3.400 3.300-5.400 7.400-5.400s7 2 7.400 5.400"/><path d="M7.800 12.600V8.600h15.600v9.400h-3.600l-3 3M17.200 18.400l1.600 1.600"/></g></svg>
<svg class="b" style="left:1859.0px;top:835px" width="24.0" height="36" viewBox="0 0 24.0 36"><g fill="none" stroke="#FFFFFF" stroke-width="1.70" stroke-linejoin="round"><path d="M3.600 25.200c1.800-2.400 2-4.600 2-8.400a6.400 6.400 0 0 1 12.800 0c0 3.800 0.200 6 2 8.400z"/><path d="M10 25.600a2 2 0 0 0 4 0"/></g></svg>
</div></div>
</body></html>
